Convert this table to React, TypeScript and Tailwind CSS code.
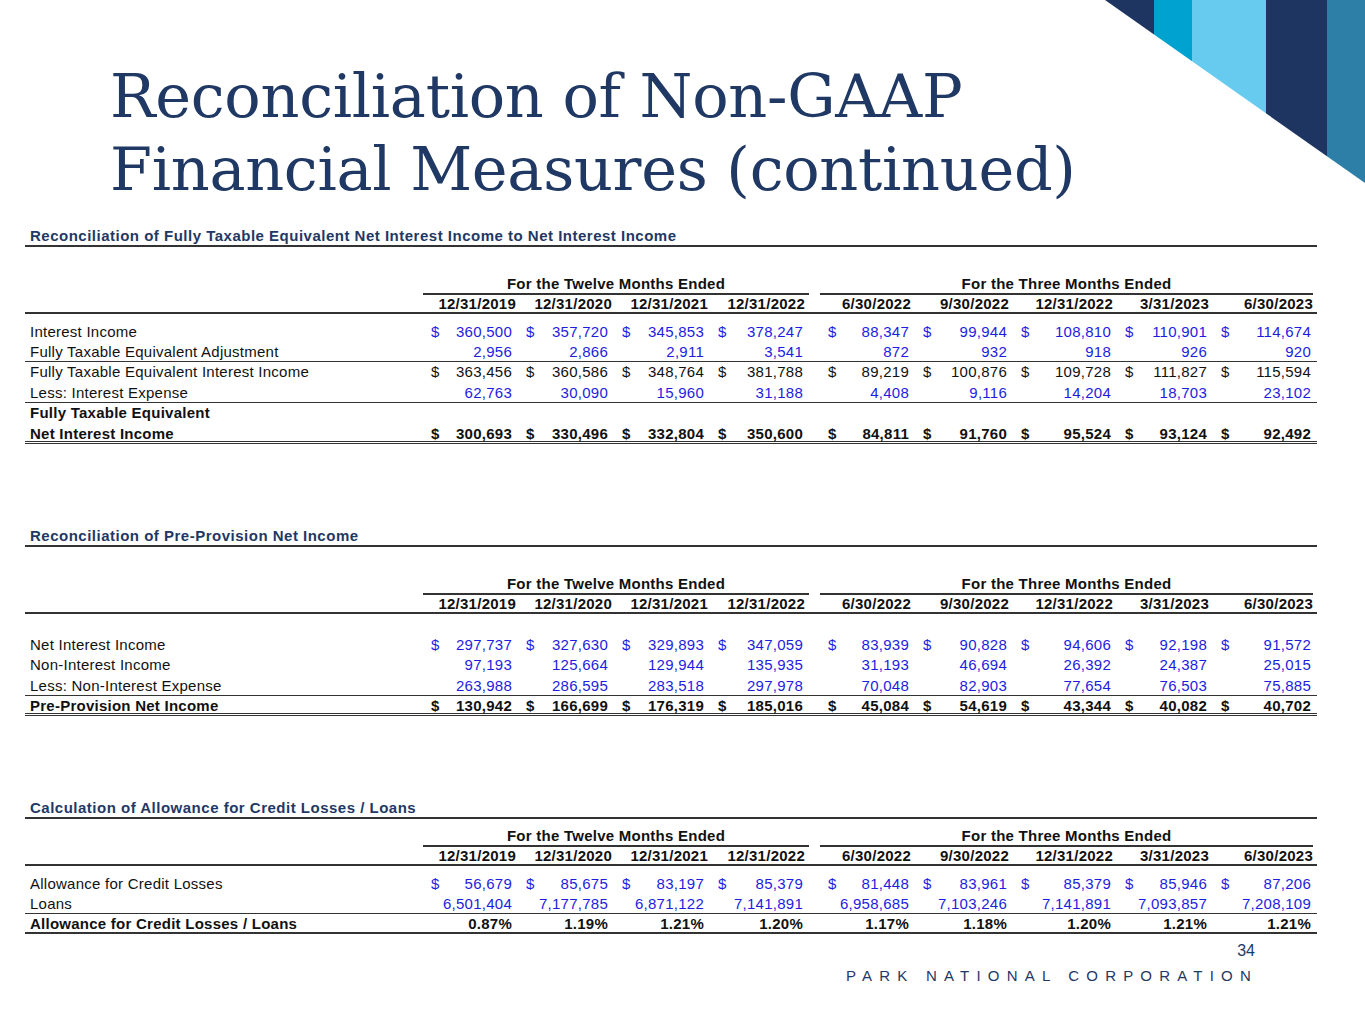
import React from 'react'

type Tone = 'blue' | 'black' | 'bold'
type Row = {
  label: string
  values?: string[]
  dollar?: boolean
  tone: Tone
  rule?: 'thin' | 'double' | 'thick'
  h?: string
}

const GRID = 'grid grid-cols-[398px_95px_96px_96px_99px_11px_95px_98px_104px_96px_104px]'

const TWELVE = ['12/31/2019', '12/31/2020', '12/31/2021', '12/31/2022']
const THREE = ['6/30/2022', '9/30/2022', '12/31/2022', '3/31/2023', '6/30/2023']

const FTE_ROWS: Row[] = [
  { label: 'Interest Income', dollar: true, tone: 'blue', values: ['360,500', '357,720', '345,853', '378,247', '88,347', '99,944', '108,810', '110,901', '114,674'] },
  { label: 'Fully Taxable Equivalent Adjustment', tone: 'blue', rule: 'thin', values: ['2,956', '2,866', '2,911', '3,541', '872', '932', '918', '926', '920'] },
  { label: 'Fully Taxable Equivalent Interest Income', dollar: true, tone: 'black', h: 'h-[21px]', values: ['363,456', '360,586', '348,764', '381,788', '89,219', '100,876', '109,728', '111,827', '115,594'] },
  { label: 'Less: Interest Expense', tone: 'blue', rule: 'thin', values: ['62,763', '30,090', '15,960', '31,188', '4,408', '9,116', '14,204', '18,703', '23,102'] },
  { label: 'Fully Taxable Equivalent', tone: 'bold', h: 'h-[21px]' },
  { label: 'Net Interest Income', dollar: true, tone: 'bold', rule: 'double', values: ['300,693', '330,496', '332,804', '350,600', '84,811', '91,760', '95,524', '93,124', '92,492'] },
]

const PPNI_ROWS: Row[] = [
  { label: 'Net Interest Income', dollar: true, tone: 'blue', values: ['297,737', '327,630', '329,893', '347,059', '83,939', '90,828', '94,606', '92,198', '91,572'] },
  { label: 'Non-Interest Income', tone: 'blue', h: 'h-[21px]', values: ['97,193', '125,664', '129,944', '135,935', '31,193', '46,694', '26,392', '24,387', '25,015'] },
  { label: 'Less: Non-Interest Expense', tone: 'blue', rule: 'thin', values: ['263,988', '286,595', '283,518', '297,978', '70,048', '82,903', '77,654', '76,503', '75,885'] },
  { label: 'Pre-Provision Net Income', dollar: true, tone: 'bold', rule: 'double', values: ['130,942', '166,699', '176,319', '185,016', '45,084', '54,619', '43,344', '40,082', '40,702'] },
]

const ACL_ROWS: Row[] = [
  { label: 'Allowance for Credit Losses', dollar: true, tone: 'blue', values: ['56,679', '85,675', '83,197', '85,379', '81,448', '83,961', '85,379', '85,946', '87,206'] },
  { label: 'Loans', tone: 'blue', rule: 'thin', values: ['6,501,404', '7,177,785', '6,871,122', '7,141,891', '6,958,685', '7,103,246', '7,141,891', '7,093,857', '7,208,109'] },
  { label: 'Allowance for Credit Losses / Loans', tone: 'bold', rule: 'thick', values: ['0.87%', '1.19%', '1.21%', '1.20%', '1.17%', '1.18%', '1.20%', '1.21%', '1.21%'] },
]

function Corner() {
  return (
    <svg className="absolute top-0 right-0" width="275" height="190" viewBox="0 0 275 190">
      <defs>
        <clipPath id="cut">
          <polygon points="15,0 275,0 275,183" />
        </clipPath>
      </defs>
      <g clipPath="url(#cut)">
        <rect x="0" y="0" width="64" height="190" fill="#1e3561" />
        <rect x="64" y="0" width="38" height="190" fill="#00a2d0" />
        <rect x="102" y="0" width="74" height="190" fill="#66cbef" />
        <rect x="176" y="0" width="61" height="190" fill="#1e3561" />
        <rect x="237" y="0" width="38" height="190" fill="#2e7fa8" />
      </g>
    </svg>
  )
}

function Heading({ text }: { text: string }) {
  return (
    <div className="h-[20px] border-b-2 border-[#333] pl-[5px] text-[15px] leading-[18px] tracking-[0.5px] font-bold text-[#1f3864]">
      {text}
    </div>
  )
}

function Header({ gapClass }: { gapClass: string }) {
  return (
    <>
      <div className={`${GRID} h-[20px] font-bold ${gapClass}`}>
        <div />
        <div className="col-span-4 border-b-2 border-[#333] text-center leading-[19px]">For the Twelve Months Ended</div>
        <div />
        <div className="col-span-5 border-b-2 border-[#333] text-center leading-[19px] mr-[4px]">For the Three Months Ended</div>
      </div>
      <div className={`${GRID} h-[20px] font-bold border-b-2 border-[#333]`}>
        <div />
        {TWELVE.map((d, i) => (
          <div key={d} className={`text-right leading-[19px] ${i === 3 ? 'pr-[4px]' : 'pr-[2px]'}`}>{d}</div>
        ))}
        <div />
        {THREE.map((d) => (
          <div key={d} className="text-right pr-[4px] leading-[19px]">{d}</div>
        ))}
      </div>
    </>
  )
}

function Cell({ v, dollar }: { v: string; dollar?: boolean }) {
  return (
    <div className="flex justify-between pl-[8px] pr-[6px]">
      <span>{dollar ? '$' : ''}</span>
      <span>{v}</span>
    </div>
  )
}

function Body({ rows }: { rows: Row[] }) {
  return (
    <>
      {rows.map((r) => {
        const color = r.tone === 'blue' ? 'text-[#1d1de0]' : 'text-[#111]'
        const weight = r.tone === 'bold' ? 'font-bold' : ''
        const rule =
          r.rule === 'thin'
            ? 'border-b border-[#333]'
            : r.rule === 'double'
              ? 'border-b-[3px] border-double border-[#333]'
              : r.rule === 'thick'
                ? 'border-b-2 border-[#333]'
                : ''
        return (
          <div key={r.label + (r.values ? r.values[0] : '')} className={`${GRID} ${r.h ?? 'h-[20px]'} leading-[19px] ${weight} ${rule}`}>
            <div className="pl-[5px] text-[#111] whitespace-nowrap">{r.label}</div>
            {r.values &&
              r.values.map((v, i) => (
                <React.Fragment key={i}>
                  {i === 4 && <div />}
                  <div className={color}>
                    <Cell v={v} dollar={r.dollar} />
                  </div>
                </React.Fragment>
              ))}
          </div>
        )
      })}
    </>
  )
}

export default function App() {
  return (
    <div className="relative w-[1365px] h-[1024px] bg-white overflow-hidden font-['Liberation_Sans',Arial,sans-serif] text-[15px] tracking-[0.25px] text-[#111]">
      <Corner />

      <h1 className="pt-[60px] pl-[110px] font-['DejaVu_Serif',Georgia,serif] text-[60.5px] leading-[73px] text-[#1f3864] tracking-[-0.3px]">
        Reconciliation of Non-GAAP
        <br />
        Financial Measures (continued)
      </h1>

      <div className="absolute left-[25px] top-[227px] w-[1292px]">
        {/* FTE net interest income */}
        <Heading text="Reconciliation of Fully Taxable Equivalent Net Interest Income to Net Interest Income" />
        <Header gapClass="mt-[27px]" />
        <div className="mt-[8px]">
          <Body rows={FTE_ROWS} />
        </div>

        {/* Pre-provision net income */}
        <div className="mt-[83px]">
          <Heading text="Reconciliation of Pre-Provision Net Income" />
        </div>
        <Header gapClass="mt-[27px]" />
        <div className="mt-[21px]">
          <Body rows={PPNI_ROWS} />
        </div>

        {/* ACL / loans */}
        <div className="mt-[83px]">
          <Heading text="Calculation of Allowance for Credit Losses / Loans" />
        </div>
        <Header gapClass="mt-[7px]" />
        <div className="mt-[8px]">
          <Body rows={ACL_ROWS} />
        </div>

        <div className="flex flex-col items-end pr-[62px] mt-[7px]">
          <div className="text-[16px] leading-[20px] tracking-normal text-[#1f3864]">34</div>
          <div className="mt-[5px] mr-[-3px] text-[15px] leading-[20px] tracking-[0.48em] text-[#1f3864]">PARK NATIONAL CORPORATION</div>
        </div>
      </div>
    </div>
  )
}
